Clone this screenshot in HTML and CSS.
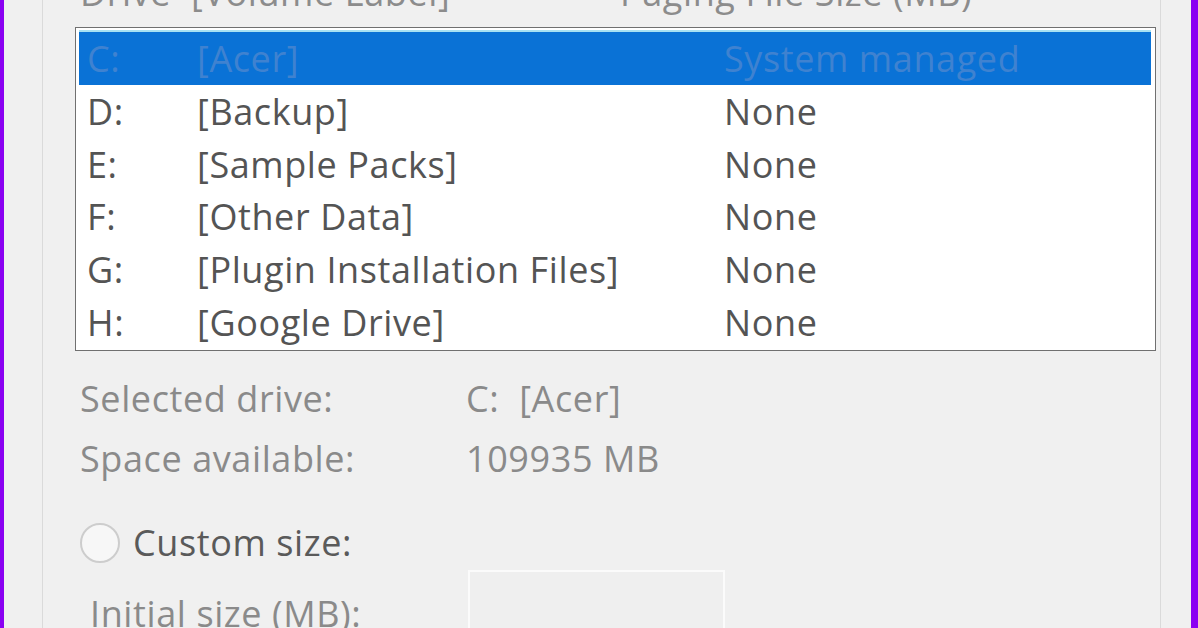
FILE: index.html
```html
<!DOCTYPE html>
<html>
<head>
<meta charset="utf-8">
<link rel="stylesheet" href="styles.css">
</head>
<body>
<div class="window">
  <div class="group">
    <div class="header">
      <span class="h-drive">Drive&nbsp; [Volume Label]</span>
      <span class="h-size">Paging File Size (MB)</span>
    </div>
    <div class="list">
      <div class="row selected"><span>C:</span><span>[Acer]</span><span>System managed</span></div>
      <div class="row"><span>D:</span><span>[Backup]</span><span>None</span></div>
      <div class="row"><span>E:</span><span>[Sample Packs]</span><span>None</span></div>
      <div class="row"><span>F:</span><span>[Other Data]</span><span>None</span></div>
      <div class="row"><span>G:</span><span>[Plugin Installation Files]</span><span>None</span></div>
      <div class="row"><span>H:</span><span>[Google Drive]</span><span>None</span></div>
    </div>
    <div class="info">
      <span>Selected drive:</span><span>C:&nbsp; [Acer]</span>
      <span>Space available:</span><span>109935 MB</span>
    </div>
    <div class="radio-row">
      <span class="radio"></span>
      <span class="radio-label">Custom size:</span>
    </div>
    <div class="field-row">
      <span class="field-label">Initial size (MB):</span>
      <span class="textbox"></span>
    </div>
  </div>
</div>
</body>
</html>
```
FILE: styles.css
```css
html, body {
  margin: 0;
  padding: 0;
  background: #f0f0f0;
  overflow: hidden;
}
.window {
  height: 628px;
  display: flex;
  background: #f0f0f0;
  border-left: 4px solid #8a00f2;
  border-right: 7px solid #8a00f2;
  font-family: "Open Sans", "Noto Sans", sans-serif;
  font-size: 36px;
  letter-spacing: 0.6px;
  overflow: hidden;
}
.group {
  flex: 1;
  margin-left: 38px;
  margin-right: 30px;
  border-left: 1px solid #dadada;
  border-right: 1px solid #dadada;
  padding: 0 4px 0 32px;
  display: flex;
  flex-direction: column;
}
.header {
  margin-top: -29px;
  height: 44px;
  line-height: 44px;
  margin-bottom: 12px;
  display: grid;
  grid-template-columns: 540px 1fr;
  color: #8c8c8c;
  padding-left: 5px;
  flex-shrink: 0;
  white-space: nowrap;
}
.list {
  flex-shrink: 0;
  border: 1px solid #707070;
  background: #ffffff;
  padding: 4px 4px 2px 3px;
  display: grid;
  grid-auto-rows: 52.67px;
}
.row {
  display: grid;
  grid-template-columns: 110px 527px 1fr;
  align-items: center;
  padding-left: 8px;
  padding-top: 2px;
  color: #545454;
  line-height: 50px;
  white-space: nowrap;
}
.row.selected {
  background: #0a72d6;
  color: #3f82d0;
  box-shadow: 0 -2px 0 #a9e2f3;
}
.info {
  margin-top: 18px;
  display: grid;
  grid-template-columns: 386px 1fr;
  grid-auto-rows: 60px;
  line-height: 60px;
  padding-left: 5px;
  color: #8a8a8a;
  white-space: nowrap;
}
.radio-row {
  margin-top: 29px;
  height: 50px;
  display: flex;
  align-items: center;
  padding-left: 5px;
  gap: 13px;
  flex-shrink: 0;
}
.radio {
  width: 36px;
  height: 36px;
  border-radius: 50%;
  border: 2px solid #cdcdcd;
  background: #f7f7f7;
  flex-shrink: 0;
}
.radio-label {
  color: #5a5a5a;
  line-height: 50px;
  white-space: nowrap;
}
.field-row {
  margin-top: 2px;
  display: flex;
  align-items: flex-start;
  flex-shrink: 0;
}
.field-label {
  width: 378px;
  padding-left: 15px;
  margin-top: 19px;
  line-height: 50px;
  color: #8a8a8a;
  white-space: nowrap;
}
.textbox {
  width: 253px;
  height: 80px;
  border: 2px solid #fbfbfb;
  background: #efefef;
}
```
